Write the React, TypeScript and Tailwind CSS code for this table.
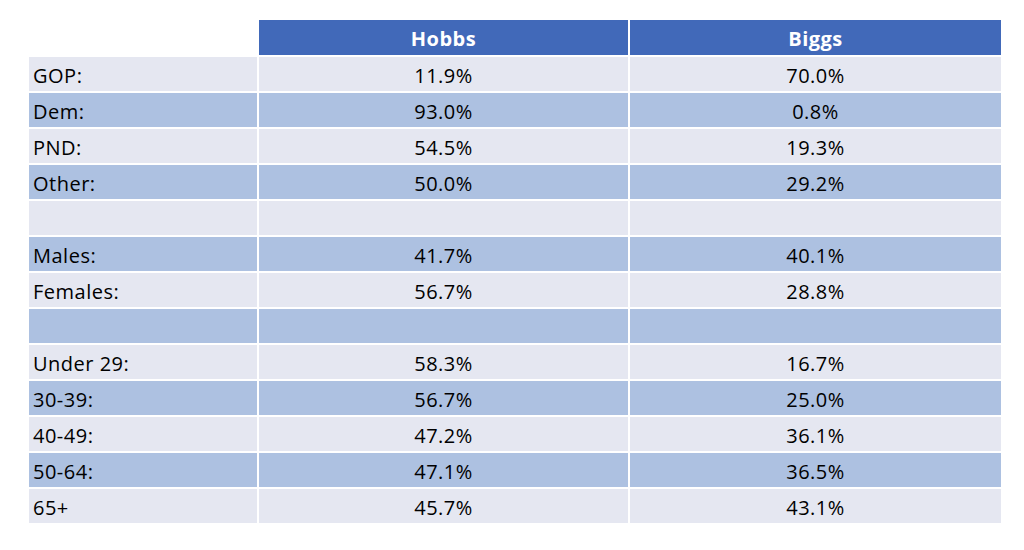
const rows: [string, string, string][] = [
	["GOP:", "11.9%", "70.0%"],
	["Dem:", "93.0%", "0.8%"],
	["PND:", "54.5%", "19.3%"],
	["Other:", "50.0%", "29.2%"],
	["", "", ""],
	["Males:", "41.7%", "40.1%"],
	["Females:", "56.7%", "28.8%"],
	["", "", ""],
	["Under 29:", "58.3%", "16.7%"],
	["30-39:", "56.7%", "25.0%"],
	["40-49:", "47.2%", "36.1%"],
	["50-64:", "47.1%", "36.5%"],
	["65+", "45.7%", "43.1%"],
];

export default function App() {
	return (
		<div
			className="w-[1024px] h-[550px] bg-white pt-[20px] pl-[29px]"
			style={{ fontFamily: '"Open Sans", "Liberation Sans", sans-serif' }}
		>
			<div className="grid grid-cols-[228px_369px_371px] gap-[2px] text-[20px] tracking-[0.5px] text-black">
				<div className="h-[35px]" />
				<div className="h-[35px] bg-[#4169b9] text-white font-bold flex items-center justify-center pt-[3px]">
					Hobbs
				</div>
				<div className="h-[35px] bg-[#4169b9] text-white font-bold flex items-center justify-center pt-[3px]">
					Biggs
				</div>
				{rows.map(([label, hobbs, biggs], i) => {
					const bg = i % 2 === 0 ? "bg-[#e5e7f1]" : "bg-[#adc1e1]";
					return [
						<div key={`${i}a`} className={`h-[34px] ${bg} flex items-center pl-[4px] pt-[4px]`}>
							{label}
						</div>,
						<div key={`${i}b`} className={`h-[34px] ${bg} flex items-center justify-center pt-[4px]`}>
							{hobbs}
						</div>,
						<div key={`${i}c`} className={`h-[34px] ${bg} flex items-center justify-center pt-[4px]`}>
							{biggs}
						</div>,
					];
				})}
			</div>
		</div>
	);
}
